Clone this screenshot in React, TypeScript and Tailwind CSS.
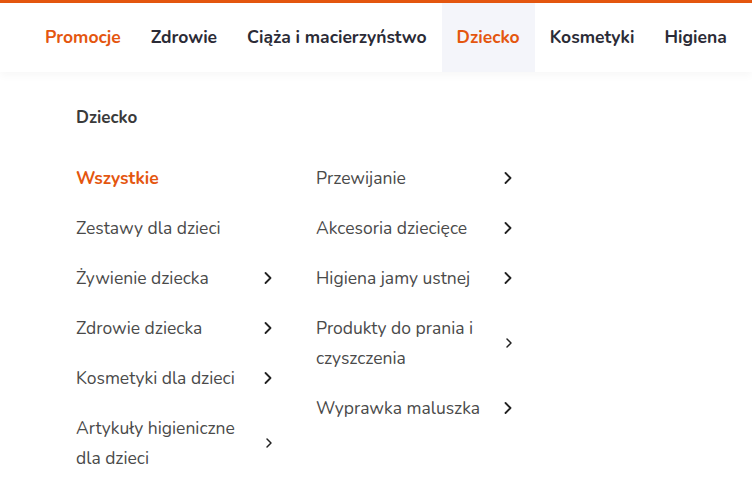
import React from 'react';
import { ChevronRight } from 'lucide-react';

const navItems = ['Promocje', 'Zdrowie', 'Ciąża i macierzyństwo', 'Dziecko', 'Kosmetyki', 'Higiena'];

const leftCol = [
  { label: 'Wszystkie', active: true },
  { label: 'Zestawy dla dzieci' },
  { label: 'Żywienie dziecka', sub: true },
  { label: 'Zdrowie dziecka', sub: true },
  { label: 'Kosmetyki dla dzieci', sub: true },
  { label: 'Artykuły higieniczne dla dzieci', sub: true, long: true },
];

const rightCol = [
  { label: 'Przewijanie', sub: true },
  { label: 'Akcesoria dziecięce', sub: true },
  { label: 'Higiena jamy ustnej', sub: true },
  { label: 'Produkty do prania i czyszczenia', sub: true, long: true },
  { label: 'Wyprawka maluszka', sub: true },
];

type Item = { label: string; active?: boolean; sub?: boolean; long?: boolean };

function MenuItem({ item }: { item: Item }) {
  return (
    <li className="flex items-center w-[202px] py-[10px]">
      <span
        className={
          'flex-1 max-w-[176px] text-[17.5px] leading-[30px] ' +
          (item.active ? 'text-[#e4560f] font-bold' : 'text-[#4a4a4a]')
        }
      >
        {item.label}
      </span>
      {item.sub &&
        (item.long ? (
          <ChevronRight size={16} strokeWidth={2.2} className="ml-auto mr-[1px] text-[#222]" />
        ) : (
          <ChevronRight size={20} strokeWidth={2.2} className="ml-auto text-[#222]" />
        ))}
    </li>
  );
}

export default function App() {
  return (
    <div className="w-[752px] h-[485px] bg-white overflow-hidden" style={{ fontFamily: 'Nunito, Lato, "Noto Sans", sans-serif' }}>
      {/* Top accent */}
      <div className="h-[3px] bg-[#e4560f]" />

      {/* Nav */}
      <nav className="h-[69px] flex items-stretch pl-[30px] shadow-[0_4px_8px_rgba(0,0,0,0.03)] relative">
        {navItems.map((n) => (
          <div
            key={n}
            className={
              'flex items-center px-[15px] text-[17.5px] font-bold whitespace-nowrap ' +
              (n === 'Dziecko' ? 'bg-[#f4f5fa] text-[#e4560f]' : n === 'Promocje' ? 'text-[#e4560f]' : 'text-[#2b2b36]')
            }
          >
            {n}
          </div>
        ))}
      </nav>

      {/* Mega menu */}
      <div className="pl-[76px] pt-[31px]">
        <h3 className="text-[17px] font-bold text-[#3a3a3a] leading-[30px]">Dziecko</h3>
        <div className="flex gap-[38px] mt-[20px]">
          <ul className="flex flex-col">
            {leftCol.map((i) => (
              <MenuItem key={i.label} item={i} />
            ))}
          </ul>
          <ul className="flex flex-col">
            {rightCol.map((i) => (
              <MenuItem key={i.label} item={i} />
            ))}
          </ul>
        </div>
      </div>
    </div>
  );
}
